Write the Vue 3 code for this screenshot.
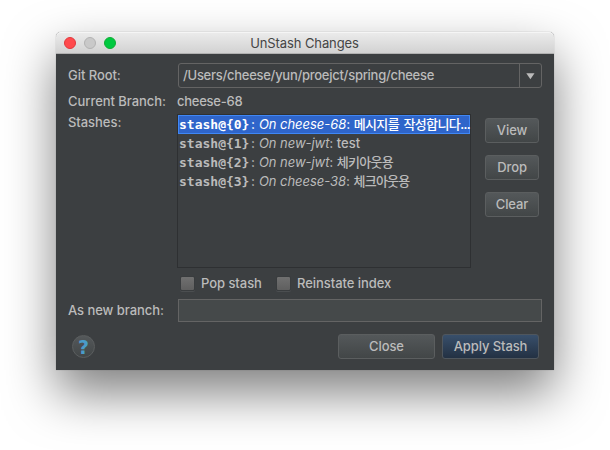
<script setup>
import { ref } from 'vue'

const stashes = [
  { id: 'stash@{0}', origin: 'On cheese-68', message: '메시지를 작성합니다...', korean: true },
  { id: 'stash@{1}', origin: 'On new-jwt', message: 'test', korean: false },
  { id: 'stash@{2}', origin: 'On new-jwt', message: '체키아웃용', korean: true },
  { id: 'stash@{3}', origin: 'On cheese-38', message: '체크아웃용', korean: true },
]
const selected = ref(0)
const actions = ['View', 'Drop', 'Clear']
const options = [
  { label: 'Pop stash', cls: 'pop' },
  { label: 'Reinstate index', cls: 'reinstate' },
]
</script>

<template>
  <main class="desktop">
    <section class="window">
      <header class="titlebar">
        <div class="lights">
          <i class="light red"></i>
          <i class="light grey"></i>
          <i class="light green"></i>
        </div>
        <span class="title">UnStash Changes</span>
      </header>

      <div class="content">
        <div class="row root-row">
          <span class="label">Git Root:</span>
          <div class="combo">
            <span class="combo-value">/Users/cheese/yun/proejct/spring/cheese</span>
            <span class="combo-arrow">
              <svg width="9" height="7" viewBox="0 0 9 7"><path d="M0.3 0.3H8.5L4.4 6.3Z" fill="#bbbbbb" /></svg>
            </span>
          </div>
        </div>

        <div class="row branch-row">
          <span class="label">Current Branch:</span>
          <span class="branch">cheese-68</span>
        </div>

        <div class="row stash-row">
          <span class="label">Stashes:</span>
          <ul class="list">
            <li
              v-for="(s, i) in stashes"
              :key="s.id"
              :class="['item', { selected: i === selected }]"
              @click="selected = i"
            ><b class="sid">{{ s.id }}</b><span class="colon first">:</span><em class="origin">{{ s.origin }}</em><span class="colon">:</span><span :class="['message', { korean: s.korean }]">{{ s.message }}</span></li>
          </ul>
          <div class="actions">
            <button v-for="a in actions" :key="a" class="btn">{{ a }}</button>
          </div>
        </div>

        <div class="options">
          <label v-for="o in options" :key="o.label" :class="['option', o.cls]">
            <i class="box"></i><span>{{ o.label }}</span>
          </label>
        </div>

        <div class="row new-row">
          <span class="label">As new branch:</span>
          <input class="field" type="text" />
        </div>

        <footer class="footer">
          <button class="help">?</button>
          <div class="confirm">
            <button class="btn wide">Close</button>
            <button class="btn wide primary">Apply Stash</button>
          </div>
        </footer>
      </div>
    </section>
  </main>
</template>

<style>
body {
  background: #fff;
  overflow: hidden;
}
</style>

<style scoped>
* {
  box-sizing: border-box;
}
.desktop {
  width: 610px;
  height: 450px;
  padding: 32px 56px 0;
  font-family: Inter, 'Noto Sans CJK KR', sans-serif;
  font-size: 13px;
  font-weight: 500;
  line-height: 16px;
  letter-spacing: -0.05px;
  color: #bbbbbb;
  white-space: nowrap;
}
.window {
  width: 498px;
  height: 338px;
  border-radius: 5px 5px 0 0;
  background: #3c3f41;
  box-shadow: 0 0 1px rgba(0, 0, 0, 0.45), 0 23px 50px rgba(0, 0, 0, 0.5);
}
.titlebar {
  display: grid;
  grid-template-columns: 84px 1fr 85px;
  align-items: center;
  height: 22px;
  padding-top: 1px;
  border-radius: 5px 5px 0 0;
  border-bottom: 1px solid #b1b1b1;
  background: linear-gradient(#ececec, #d2d2d2);
  box-shadow: inset 0 1px #f5f5f5;
}
.lights {
  display: flex;
  gap: 8px;
  padding-left: 8px;
}
.light {
  width: 12px;
  height: 12px;
  border-radius: 50%;
  border: 1px solid;
}
.red { background: #ff4a4d; border-color: #e2383c; }
.grey { background: #c9c9c9; border-color: #b3b3b3; }
.green { background: #00c940; border-color: #10ad34; }
.title {
  text-align: center;
  color: #454545;
  font-weight: 400;
  letter-spacing: -0.1px;
}
.content {
  display: flex;
  flex-direction: column;
  padding: 9px 12px 0;
}
.row {
  display: flex;
}
.label {
  flex: none;
  width: 110px;
}
.root-row {
  height: 25px;
  align-items: center;
}
.root-row .label,
.new-row .label {
  padding-bottom: 1px;
}
.combo {
  display: flex;
  width: 364px;
  height: 25px;
  border: 1px solid #646464;
  border-radius: 3px;
}
.combo-value {
  width: 341px;
  padding: 3px 0 0 4px;
  border-right: 1px solid #646464;
  letter-spacing: -0.27px;
}
.combo-arrow {
  display: flex;
  flex: 1;
  align-items: center;
  justify-content: center;
  padding-top: 1px;
}
.branch-row {
  height: 26px;
  padding-top: 5px;
}
.branch {
  margin-left: -1px;
  letter-spacing: -0.25px;
}
.stash-row {
  height: 154px;
}
.list {
  width: 294px;
  height: 154px;
  margin: 0 0 0 -1px;
  padding: 0;
  list-style: none;
  border: 1px solid #2e3032;
}
.item {
  display: flex;
  height: 19px;
  padding-left: 1px;
  line-height: 19px;
}
.selected {
  background: #2f65ca;
  color: #fff;
  box-shadow: inset 0 0 0 1px #3f87f5;
}
.sid {
  font-family: 'DejaVu Sans Mono', monospace;
  font-size: 13px;
  letter-spacing: 0;
}
.colon {
  width: 7.5px;
}
.first {
  width: 9.5px;
  padding-left: 1.5px;
}
.origin {
  font-weight: 400;
}
.korean {
  font-family: 'Noto Sans CJK KR', sans-serif;
  line-height: 17px;
  letter-spacing: -0.75px;
  word-spacing: 2px;
}
.selected .korean {
  letter-spacing: -0.6px;
}
.actions {
  display: flex;
  flex-direction: column;
  gap: 12px;
  padding: 4px 0 0 14px;
}
.btn {
  width: 54px;
  height: 25px;
  padding: 0 0 1px;
  border: 1px solid #5b5e5f;
  border-radius: 3px;
  background: linear-gradient(#54585a, #424647);
  color: #bbbbbb;
  font: inherit;
  letter-spacing: -0.1px;
}
.options {
  display: flex;
  height: 31px;
  padding: 8px 0 0 112px;
}
.option {
  display: flex;
  gap: 6px;
  height: 15px;
  line-height: 15px;
}
.pop {
  width: 96px;
}
.box {
  width: 15px;
  height: 15px;
  border: 1px solid #393c3e;
  border-radius: 2px;
  background: linear-gradient(#707070, #5f5f5f);
  box-shadow: 0 1px #4b4e50;
}
.new-row {
  height: 23px;
  align-items: center;
}
.field {
  width: 364px;
  height: 23px;
  padding: 0 4px;
  border: 1px solid #646464;
  background: #45494a;
  color: #bbbbbb;
  font: inherit;
  outline: none;
}
.footer {
  display: flex;
  justify-content: space-between;
  padding: 12px 3px 0 4px;
}
.help {
  width: 23px;
  height: 23px;
  margin-top: 1px;
  padding: 0;
  border: 1px solid #5b5e5f;
  border-radius: 50%;
  background: linear-gradient(#54585a, #424647);
  color: #4a9cc9;
  font: 700 19px/20px 'DejaVu Sans', sans-serif;
}
.confirm {
  display: flex;
  gap: 7px;
}
.wide {
  width: 97px;
}
.primary {
  border-color: #4f565d;
  background: linear-gradient(#384f6b, #233143);
}
</style>
